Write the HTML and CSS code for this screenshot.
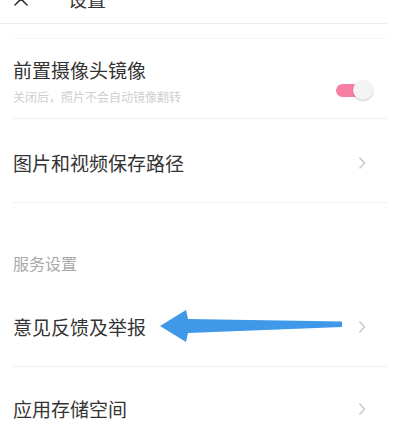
FILE: index.html
```html
<!DOCTYPE html>
<html lang="zh-CN">
<head>
<meta charset="utf-8">
<title>设置</title>
<link rel="stylesheet" href="styles.css">
</head>
<body>
<div class="page">
  <div class="header">
    <div class="header-inner">
      <svg class="close" width="16" height="16" viewBox="0 0 16 16"><path d="M2 2 L14 14 M14 2 L2 14" stroke="#333" stroke-width="1.6" fill="none" stroke-linecap="round"/></svg>
      <span class="header-title">设置</span>
    </div>
  </div>

  <div class="group">
    <div class="row row-toggle">
      <div class="texts">
        <div class="title">前置摄像头镜像</div>
        <div class="subtitle">关闭后，照片不会自动镜像翻转</div>
      </div>
      <div class="toggle"><span class="track"></span><span class="knob"></span></div>
    </div>
    <div class="row row-path">
      <div class="title">图片和视频保存路径</div>
      <svg class="chev" width="8" height="14" viewBox="0 0 8 14"><polyline points="1.5,1.5 6.5,7 1.5,12.5" fill="none" stroke="#c9c9c9" stroke-width="1.5"/></svg>
    </div>
  </div>

  <div class="section">服务设置</div>

  <div class="group group-service">
    <div class="row row-feedback">
      <div class="title">意见反馈及举报</div>
      <svg class="chev" width="8" height="14" viewBox="0 0 8 14"><polyline points="1.5,1.5 6.5,7 1.5,12.5" fill="none" stroke="#c9c9c9" stroke-width="1.5"/></svg>
    </div>
    <div class="row row-storage">
      <div class="title">应用存储空间</div>
      <svg class="chev" width="8" height="14" viewBox="0 0 8 14"><polyline points="1.5,1.5 6.5,7 1.5,12.5" fill="none" stroke="#c9c9c9" stroke-width="1.5"/></svg>
    </div>
  </div>
</div>

<svg class="annotation" width="394" height="428" viewBox="0 0 394 428">
  <polygon points="160,326 186,310 188,319 342,321.5 342,327 188,333 186,342" fill="#3f99e8"/>
</svg>
</body>
</html>
```

FILE: styles.css
```css
html, body {
  margin: 0;
  padding: 0;
  background: #ffffff;
}
body {
  position: relative;
  width: 394px;
  height: 428px;
  overflow: hidden;
  font-family: "Noto Sans CJK SC", "Noto Sans", sans-serif;
  color: #333333;
}
.page {
  width: 387px;
}
.header {
  height: 23px;
  border-bottom: 1px solid #ededed;
  overflow: hidden;
}
.header-inner {
  display: flex;
  align-items: center;
  height: 46px;
  margin-top: -24px;
  padding-left: 13px;
}
.close {
  flex: none;
}
.header-title {
  margin-left: 39px;
  font-size: 19px;
  line-height: 46px;
  color: #333;
}
.group {
  margin-top: 14px;
  margin-left: 13px;
  border-top: 1px solid #f4f4f4;
}
.group-service {
  margin-top: 0;
  border-top: none;
}
.row {
  display: flex;
  align-items: center;
  justify-content: space-between;
  border-bottom: 1px solid #f1f1f1;
  padding-right: 21px;
  box-sizing: border-box;
}
.title {
  font-size: 19px;
  line-height: 26px;
  color: #333333;
  white-space: nowrap;
}
.subtitle {
  margin-top: 6px;
  font-size: 12px;
  line-height: 16px;
  color: #cfcfcf;
  white-space: nowrap;
}
.row-toggle {
  height: 80px;
  align-items: flex-start;
  padding-top: 18px;
  padding-right: 14px;
}
.toggle {
  position: relative;
  width: 37px;
  height: 20px;
  margin-top: 23px;
}
.track {
  position: absolute;
  left: 0;
  top: 3.5px;
  width: 34px;
  height: 13px;
  border-radius: 7px;
  background: #f77fa3;
}
.knob {
  position: absolute;
  right: 0;
  top: 0;
  width: 20px;
  height: 20px;
  border-radius: 50%;
  background: #f3f3f3;
  box-shadow: 0 1px 2px rgba(0, 0, 0, 0.22);
}
.row-path {
  height: 84px;
  padding-top: 4px;
}
.section {
  padding: 50px 0 15px 13px;
  font-size: 16px;
  line-height: 20px;
  color: #a8a8a8;
}
.row-feedback {
  height: 79px;
}
.row-storage {
  height: 83px;
  border-bottom: none;
}
.chev {
  flex: none;
}
.annotation {
  position: absolute;
  left: 0;
  top: 0;
  pointer-events: none;
}
```
